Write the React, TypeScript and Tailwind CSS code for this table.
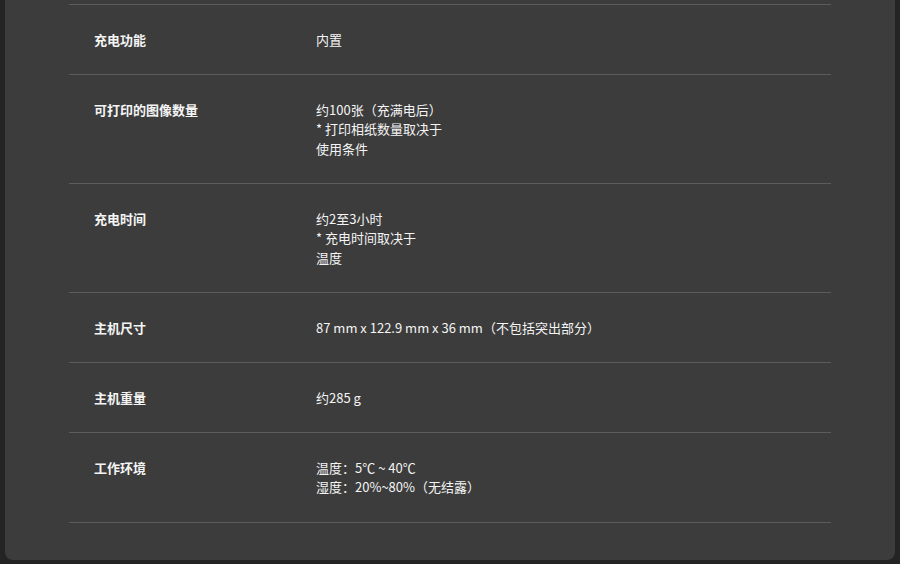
const specs: { label: string; value: string[] }[] = [
  { label: "充电功能", value: ["内置"] },
  { label: "可打印的图像数量", value: ["约100张（充满电后）", "* 打印相纸数量取决于", "使用条件"] },
  { label: "充电时间", value: ["约2至3小时", "* 充电时间取决于", "温度"] },
  { label: "主机尺寸", value: ["87 mm x 122.9 mm x 36 mm（不包括突出部分）"] },
  { label: "主机重量", value: ["约285 g"] },
  { label: "工作环境", value: ["温度：5℃ ~ 40℃", "湿度：20%~80%（无结露）"] },
];

export default function App() {
  return (
    <div
      className="min-h-[564px] bg-[#242424] px-[5px] pb-[4px] text-[13px] leading-[19.5px] text-[#f4f4f4]"
      style={{ fontFamily: '"Noto Sans CJK SC", "Open Sans", sans-serif' }}
    >
      <div className="rounded-b-lg bg-[#3c3c3c] px-[64px] pt-[4px] pb-[37px]">
        <div className="border-t border-[#5c5c5c]">
          {specs.map((s) => (
            <div key={s.label} className="flex border-b border-[#5c5c5c] py-[24.75px]">
              <div className="w-[247px] shrink-0 pl-[25px] font-bold">{s.label}</div>
              <div>
                {s.value.map((v) => (
                  <div key={v}>{v}</div>
                ))}
              </div>
            </div>
          ))}
        </div>
      </div>
    </div>
  );
}
